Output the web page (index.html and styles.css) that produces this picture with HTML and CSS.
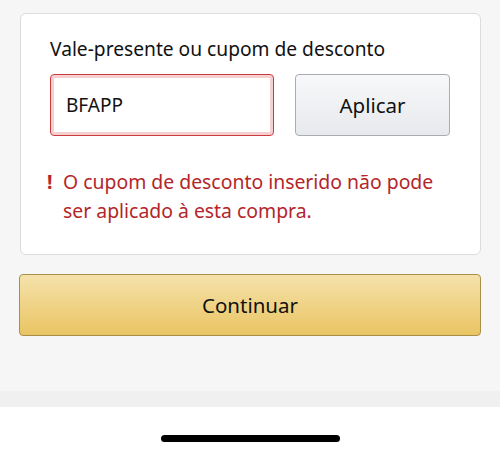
FILE: index.html
```html
<!DOCTYPE html>
<html lang="pt-BR">
<head>
    <meta charset="UTF-8">
    <meta name="viewport" content="width=device-width, initial-scale=1.0">
    <title>Cupom de desconto</title>
    <link rel="stylesheet" href="styles.css">
</head>
<body>
    <div class="screen">
        <div class="content">
            <div class="card">
                <label class="label" for="coupon">Vale-presente ou cupom de desconto</label>
                <div class="coupon-row">
                    <div class="input-box">
                        <input id="coupon" class="coupon-input" type="text" value="BFAPP">
                    </div>
                    <button class="apply-button">Aplicar</button>
                </div>
                <div class="error">
                    <span class="error-mark">!</span>
                    <span class="error-text">O cupom de desconto inserido não pode ser aplicado à esta compra.</span>
                </div>
            </div>
            <button class="continue-button">Continuar</button>
        </div>
        <div class="band"></div>
        <div class="home-area">
            <span class="home-indicator"></span>
        </div>
    </div>
</body>
</html>
```

FILE: styles.css
```css
* {
    box-sizing: border-box;
}

body {
    margin: 0;
    font-family: "Noto Sans", Arial, sans-serif;
    background-color: #ffffff;
    color: #111;
}

.screen {
    width: 500px;
    height: 453px;
    display: flex;
    flex-direction: column;
}

.content {
    height: 391px;
    padding: 13px 19px 0 20px;
    background-color: #f6f6f6;
}

.card {
    width: 461px;
    height: 242px;
    background-color: #fff;
    border: 1px solid #dcdcdc;
    border-radius: 6px;
    padding: 23px 29px 0 29px;
}

.label {
    display: block;
    font-size: 19.2px;
    line-height: 24px;
    color: #111;
    margin-bottom: 13px;
}

.coupon-row {
    display: flex;
    gap: 21px;
}

.input-box {
    width: 224px;
    height: 62px;
    border: 1px solid #cc3b3b;
    border-radius: 4px;
    box-shadow: inset 0 0 0 3px #f6d0d0;
    padding: 3px;
}

.coupon-input {
    width: 100%;
    height: 100%;
    border: none;
    outline: none;
    background: #fff;
    font-family: inherit;
    font-size: 19px;
    color: #111;
    padding: 0 0 0 12px;
}

.apply-button {
    width: 155px;
    height: 62px;
    border: 1px solid #a9adb3;
    border-radius: 4px;
    background: linear-gradient(#f7f8fa, #e7e9ec);
    font-family: inherit;
    font-size: 20.5px;
    color: #111;
    cursor: pointer;
}

.error {
    display: flex;
    margin-top: 31px;
    color: #b3262b;
    font-size: 19.4px;
    line-height: 29px;
}

.error-mark {
    width: 16px;
    flex-shrink: 0;
    font-weight: bold;
    margin-left: -3px;
}

.error-text {
    padding-right: 12px;
}

.continue-button {
    display: block;
    width: 462px;
    height: 62px;
    margin-top: 19px;
    margin-left: -1px;
    border: 1px solid #a8904a;
    border-radius: 4px;
    background: linear-gradient(#f5e2ab, #e9c462);
    font-family: inherit;
    font-size: 20.5px;
    color: #111;
    cursor: pointer;
}

.band {
    height: 16px;
    background-color: #f0f0f0;
}

.home-area {
    flex: 1;
    background-color: #fff;
    display: flex;
    justify-content: center;
    padding-top: 28px;
}

.home-indicator {
    width: 179px;
    height: 7px;
    border-radius: 4px;
    background-color: #000;
}
```
